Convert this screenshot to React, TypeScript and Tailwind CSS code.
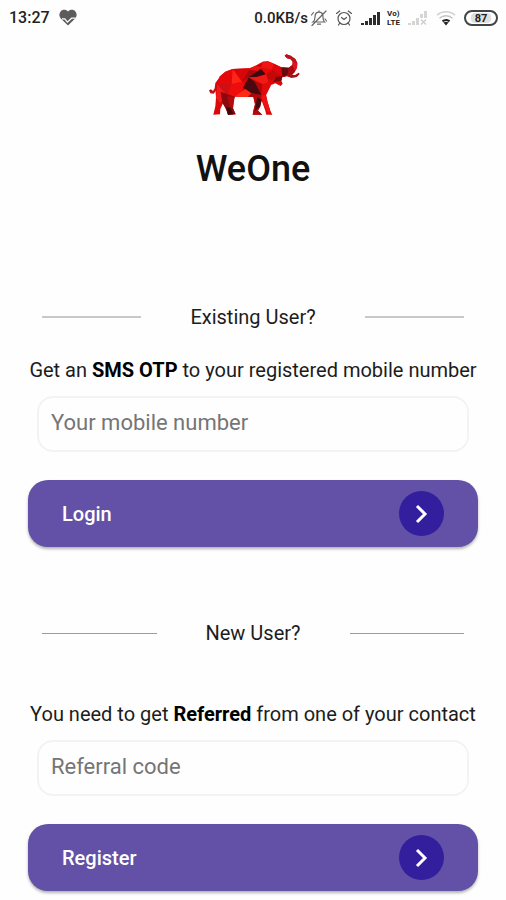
import { useState } from "react";
import type { ReactNode } from "react";

function HeartIcon() {
  return (
    <svg width="20" height="18" viewBox="0 0 20 18" aria-hidden="true">
      <path d="M10 2.500C8.200.4 4.600.2 2.600 2.400.8 4.400 1 7.400 2.800 9.400L10 16.600l7.200-7.200c1.800-2 2-5 .2-7C15.400.2 11.800.4 10 2.500z" fill="#5c5c5c" />
      <path d="M4 9.800h2.800l2.600 3.400 4.200-4h4" fill="none" stroke="#fff" strokeWidth="1.200" />
    </svg>
  );
}

function BellOffIcon() {
  return (
    <svg width="18" height="18" viewBox="0 0 18 18" fill="none" stroke="#666" strokeWidth="1.200" strokeLinecap="round" aria-hidden="true">
      <path d="M3 13h11.500c-1.500-1.200-1.500-2.500-1.500-5 0-3-1.600-4.800-4-4.800S5 5 5 8c0 2.500-.5 3.800-2 5zM7.500 15.200h3M9 1.800v1.200M2 16.500L16 2M1.500 6l2-2.500M16.500 12l-1.500-2" />
    </svg>
  );
}

function AlarmIcon() {
  return (
    <svg width="18" height="18" viewBox="0 0 18 18" fill="none" stroke="#555" strokeWidth="1.200" strokeLinecap="round" aria-hidden="true">
      <circle cx="9" cy="9.500" r="6" />
      <path d="M1.500 4.500L4.800 2M16.500 4.500L13.200 2M6.500 8.500L9 10.500l2.500-2M4.800 14l-1.300 2M13.200 14l1.300 2" />
    </svg>
  );
}

function SignalIcon() {
  return (
    <svg width="20" height="16" viewBox="0 0 20 16" fill="#2d2d2d" aria-hidden="true">
      <path d="M0 13h3v2H0zM4 11h3v4H4zM8 8h3v7H8zM12 5h3v10h-3zM16 2h3v13h-3z" />
    </svg>
  );
}

function NoSignalIcon() {
  return (
    <svg width="20" height="16" viewBox="0 0 20 16" fill="#d5d5d5" aria-hidden="true">
      <path d="M0 13h3v2H0zM4 11h3v4H4zM8 8h3v7H8zM12 4h3v4h-3zM16 1h3v7h-3z" />
      <path d="M13 9.500l5 5M18 9.500l-5 5" stroke="#cbcbcb" strokeWidth="1.200" />
    </svg>
  );
}

function WifiIcon() {
  return (
    <svg width="20" height="16" viewBox="0 0 20 16" fill="none" aria-hidden="true">
      <path d="M1 5.200c5-4.600 13-4.600 18 0" stroke="#cfcfcf" strokeWidth="1.500" />
      <path d="M3.500 8.200c3.800-3.200 9.200-3.200 13 0" stroke="#c0c0c0" strokeWidth="1.500" />
      <path d="M5.800 10.600c2.600-2 5.800-2 8.400 0L10 15.400z" fill="#222" />
      <path d="M7.500 12.200c1.500-1 3.500-1 5 0" stroke="#fff" strokeWidth=".8" />
    </svg>
  );
}

function StatusBar() {
  return (
    <header className="flex h-9 items-center justify-between pr-2 pl-[9px] text-[#222]">
      <div className="flex items-center gap-2">
        <span className="text-[16px] leading-5 font-medium">13:27</span>
        <HeartIcon />
      </div>
      <div className="flex items-center">
        <span className="mr-0.5 text-[15px] leading-5 font-medium">0.0KB/s</span>
        <BellOffIcon />
        <span className="ml-[7px]"><AlarmIcon /></span>
        <span className="ml-2"><SignalIcon /></span>
        <span className="ml-[6px] flex flex-col text-[8px] leading-[9px] font-bold">
          <span>Vo)</span>
          <span>LTE</span>
        </span>
        <span className="ml-2"><NoSignalIcon /></span>
        <span className="ml-2"><WifiIcon /></span>
        <span className="ml-2 flex h-4 w-[34px] items-center justify-center rounded-full border-2 border-[#444] bg-white">
          <span className="h-2.5 w-5 rounded-sm bg-[#e0e0e0] text-center text-[11px] leading-[11px] font-bold">87</span>
        </span>
      </div>
    </header>
  );
}

function ElephantLogo() {
  return (
    <svg width="94" height="64" viewBox="18 24 282 192" role="img" aria-label="WeOne elephant" className="mx-auto mt-[17px]">
      <path d="M58 98L46 114L44 130L39 138L33 133L27 136L31 145L41 146L49 136L52 118L62 104Z" fill="#c40f14" />
      <path d="M60 94L76 80L98 72L148 70L166 62L188 50L204 49L222 56L244 67L266 68L277 60L278 50L272 43L261 40L254 32L259 28L272 32L286 42L292 54L291 68L284 82L276 90L286 90L297 83L298 88L290 96L274 98L262 94L247 97L244 107L248 116L242 123L226 115L213 120L205 136L198 150L203 172L211 197L217 209L199 209L195 194L184 164L181 184L174 197L187 209L158 209L160 196L165 178L160 156L104 155L100 170L99 190L107 208L84 209L78 192L69 175L61 192L60 208L40 209L46 184L48 158L46 130L52 108Z" fill="#dc0709" />
      <path d="M60 94L76 80L98 72L95 117L52 118Z" fill="#e5080b" />
      <path d="M98 72L148 70L126 110Z" fill="#d80608" />
      <path d="M98 72L126 110L95 118Z" fill="#ff2418" />
      <path d="M52 118L95 117L82 154L48 140Z" fill="#cf1013" />
      <path d="M95 117L126 110L142 136L104 155L82 154Z" fill="#ef0c0c" />
      <path d="M52 118L82 154L60 174L48 158Z" fill="#f0191b" />
      <path d="M62 140L104 155L100 170L99 190L107 208L84 209L78 192L67 173Z" fill="#8b080c" />
      <path d="M82 154L104 155L99 190L88 184Z" fill="#b20a0d" />
      <path d="M78 186L91 190L101 208L84 209Z" fill="#3d080c" />
      <path d="M126 110L148 74L184 58L179 79L146 97Z" fill="#a7090d" />
      <path d="M148 74L166 62L188 66L174 78Z" fill="#ed1111" />
      <path d="M146 97L182 72L199 88L170 96Z" fill="#3b090e" />
      <path d="M188 50L204 49L222 56L218 74L184 68Z" fill="#f11414" />
      <path d="M222 56L244 67L252 92L214 80Z" fill="#dc0709" />
      <path d="M184 68L218 74L208 102L197 88Z" fill="#e70a0b" />
      <path d="M199 88L218 74L246 97L216 105L205 102Z" fill="#c3070a" />
      <path d="M228 96L247 94L244 107L220 111Z" fill="#79090c" />
      <path d="M146 97L170 96L199 88L205 112L194 121L164 111Z" fill="#f01914" />
      <path d="M146 97L188 118L184 151L164 135Z" fill="#b3070b" />
      <path d="M146 97L164 111L184 150L152 144L129 128Z" fill="#480a0e" />
      <path d="M129 128L152 144L180 150L160 156L126 154Z" fill="#a70a0d" />
      <path d="M104 155L136 132L154 145L142 156Z" fill="#ff2b17" />
      <path d="M188 118L205 112L213 120L198 150L184 151Z" fill="#df0c0d" />
      <path d="M160 155L184 151L181 184L174 197L187 209L158 209L165 178Z" fill="#b3090d" />
      <path d="M172 156L186 165L180 184L164 199Z" fill="#440a0e" />
      <path d="M184 151L198 150L203 172L211 197L203 203L187 169Z" fill="#f01114" />
      <path d="M244 67L266 68L270 82L254 95L247 94Z" fill="#650b10" />
      <path d="M266 68L277 60L285 78L276 90L262 94Z" fill="#a50b12" />
      <path d="M277 60L278 50L292 54L291 68L285 78Z" fill="#dc1720" />
      <path d="M254 32L259 28L272 32L286 42L292 54L278 50L272 43L261 40Z" fill="#b8141e" />
      <path d="M262 94L276 90L286 90L297 83L298 88L290 96L274 98Z" fill="#a3121b" />
    </svg>
  );
}

function SectionHeading({ rule, children }: { rule: string; children: ReactNode }) {
  return (
    <div className="flex items-center gap-[49px] px-3.5">
      <span className={`flex-1 ${rule}`} />
      <h2 className="text-[20px] leading-6">{children}</h2>
      <span className={`flex-1 ${rule}`} />
    </div>
  );
}

type FieldProps = { id: string; type: string; placeholder: string; children: ReactNode };

function Field({ id, type, placeholder, children }: FieldProps) {
  const [value, setValue] = useState("");
  return (
    <div>
      <label htmlFor={id} className="block text-center text-[20px] leading-6 whitespace-nowrap">
        {children}
      </label>
      <div className="mt-3.5 px-[9px]">
        <input
          id={id}
          type={type}
          value={value}
          onChange={(event) => setValue(event.target.value)}
          placeholder={placeholder}
          className="block h-14 w-full rounded-2xl border-2 border-[#f3f3f3] px-3 pb-1 text-[22px] text-[#222] outline-none placeholder:text-[#757575] focus:border-[#6250a6]"
        />
      </div>
    </div>
  );
}

function ActionButton({ children }: { children: ReactNode }) {
  return (
    <button type="submit" className="mt-7 flex h-[67px] w-full items-center justify-between rounded-[20px] bg-[#6251a6] px-[34px] text-[20px] font-medium text-white shadow-[0_2px_3px_rgba(0,0,0,0.3)]">
      {children}
      <span className="flex size-[45px] items-center justify-center rounded-full bg-[#331e9e]">
        <svg width="14" height="20" viewBox="0 0 14 20" fill="none" stroke="#fff" strokeWidth="3" aria-hidden="true">
          <path d="M2 2l8 8-8 8" />
        </svg>
      </span>
    </button>
  );
}

export default function App() {
  return (
    <div className="min-h-screen bg-[#fefefe] pb-2 font-[Roboto,sans-serif] text-[#1c1c1c]">
      <StatusBar />
      <main className="px-7">
        <ElephantLogo />
        <h1 className="mt-7 text-center text-[36px] leading-[48px] font-medium text-[#111]">WeOne</h1>
        <form className="mt-28" onSubmit={(event) => event.preventDefault()}>
          <SectionHeading rule="h-0.5 bg-[#c8c8c8]">Existing User?</SectionHeading>
          <div className="mt-[29px]">
            <Field id="mobile" type="tel" placeholder="Your mobile number">
              Get an <b className="font-bold text-black">SMS OTP</b> to your registered mobile number
            </Field>
          </div>
          <ActionButton>Login</ActionButton>
        </form>
        <form className="mt-[74px]" onSubmit={(event) => event.preventDefault()}>
          <SectionHeading rule="h-px bg-[#9c9c9c]">New User?</SectionHeading>
          <div className="mt-[57px]">
            <Field id="referral" type="text" placeholder="Referral code">
              You need to get <b className="font-bold text-black">Referred</b> from one of your contact
            </Field>
          </div>
          <ActionButton>Register</ActionButton>
        </form>
      </main>
    </div>
  );
}
